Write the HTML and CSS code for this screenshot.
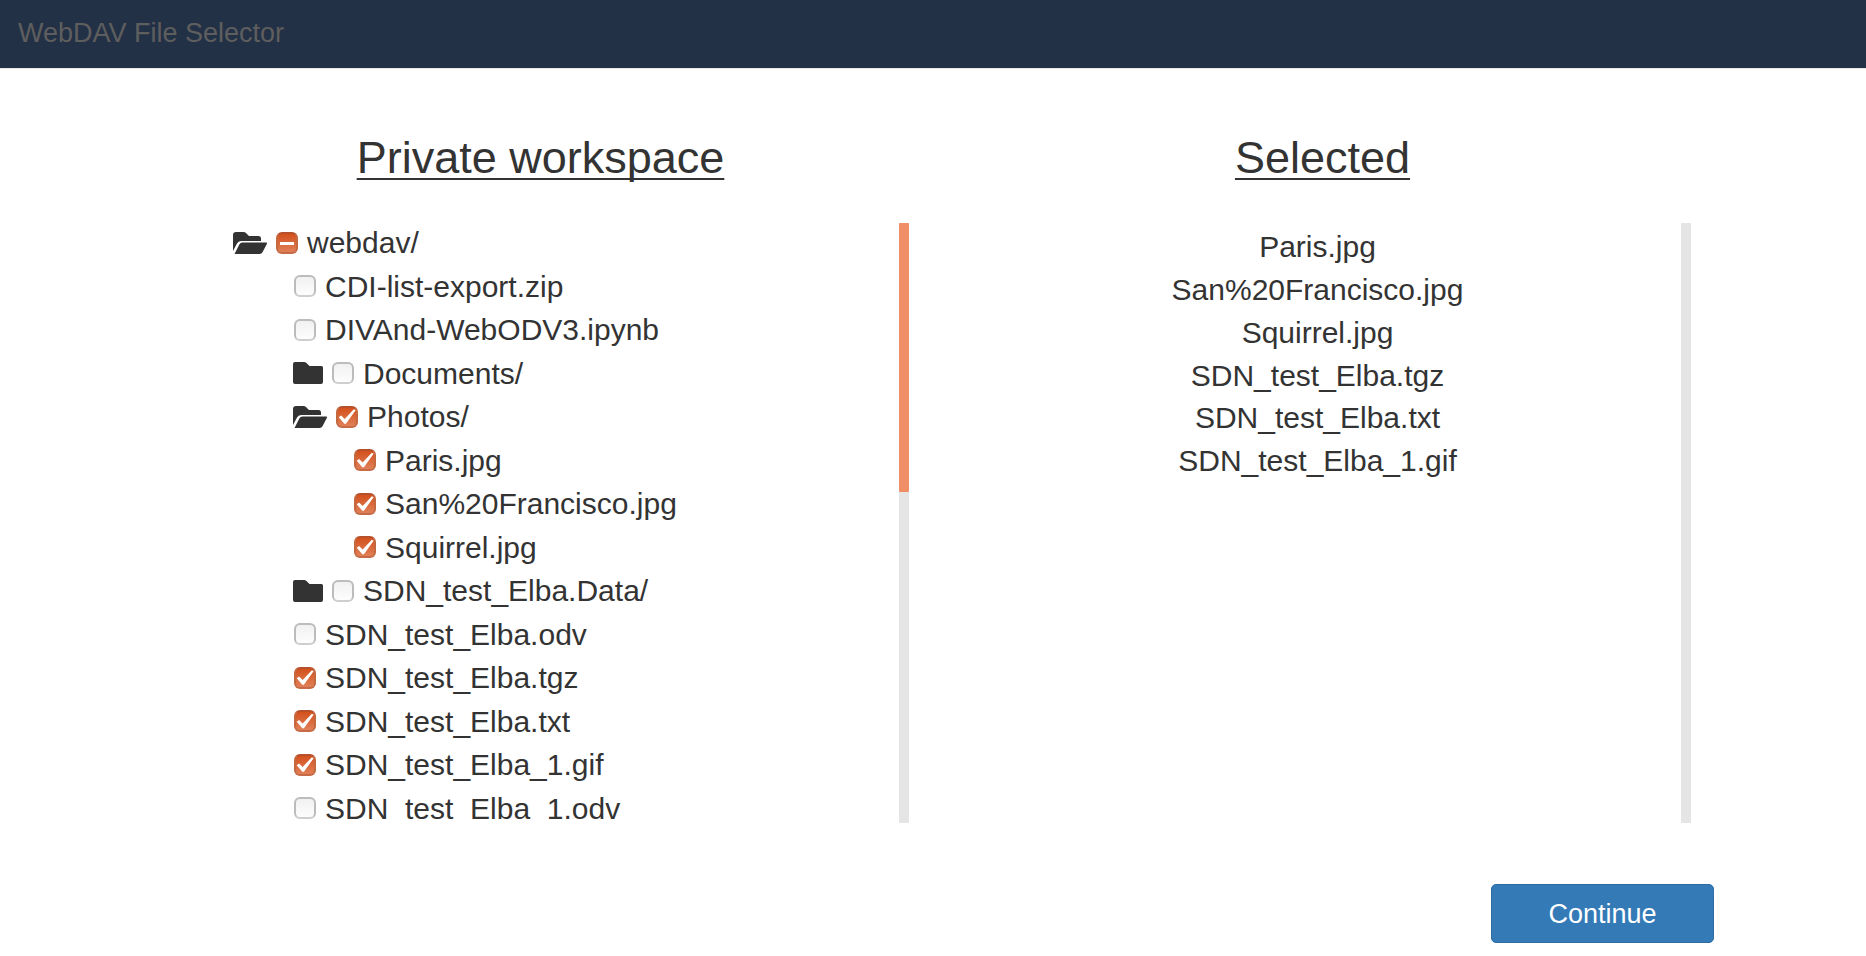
FILE: index.html
```html
<!DOCTYPE html>
<html lang="en">
<head>
<meta charset="utf-8">
<title>WebDAV File Selector</title>
<link rel="stylesheet" href="styles.css">
</head>
<body>
<svg class="sprite" aria-hidden="true">
  <symbol id="folder-open" viewBox="0 0 34 22">
    <path d="M0 19V3Q0 0 3 0H10.500Q12 0 13 1L16 4H25.500Q28 4 28 6.500V9H8Q5.300 9 4 11.500Z"/>
    <path d="M1.500 22L6.300 12.500Q7.300 10.500 9.500 10.500H33.500Q34.300 10.800 33.800 11.900L29.500 20.300Q28.600 22 26.600 22Z"/>
  </symbol>
  <symbol id="folder" viewBox="0 0 30 22">
    <path d="M0 2Q0 0 2 0H11Q12.500 0 13.500 1L16.500 4H28.500Q30 4 30 5.500V20Q30 22 28 22H2Q0 22 0 20Z"/>
  </symbol>
</svg>
<header class="navbar"><span class="brand">WebDAV File Selector</span></header>
<main class="content">
  <div class="panes">
    <section>
      <h1 class="title">Private workspace</h1>
      <div class="pane">
        <ul class="tree">
          <li>
            <div class="row"><svg class="icon icon-open"><use href="#folder-open"/></svg><input class="check partial" type="checkbox" id="f0"><label for="f0">webdav/</label></div>
            <ul class="branch">
              <li class="row"><input class="check" type="checkbox" id="f1"><label for="f1">CDI-list-export.zip</label></li>
              <li class="row"><input class="check" type="checkbox" id="f2"><label for="f2">DIVAnd-WebODV3.ipynb</label></li>
              <li class="row"><svg class="icon"><use href="#folder"/></svg><input class="check" type="checkbox" id="f3"><label for="f3">Documents/</label></li>
              <li>
                <div class="row"><svg class="icon icon-open"><use href="#folder-open"/></svg><input class="check" type="checkbox" id="f4" checked><label for="f4">Photos/</label></div>
                <ul class="branch">
                  <li class="row"><input class="check" type="checkbox" id="f5" checked><label for="f5">Paris.jpg</label></li>
                  <li class="row"><input class="check" type="checkbox" id="f6" checked><label for="f6">San%20Francisco.jpg</label></li>
                  <li class="row"><input class="check" type="checkbox" id="f7" checked><label for="f7">Squirrel.jpg</label></li>
                </ul>
              </li>
              <li class="row"><svg class="icon"><use href="#folder"/></svg><input class="check" type="checkbox" id="f8"><label for="f8">SDN_test_Elba.Data/</label></li>
              <li class="row"><input class="check" type="checkbox" id="f9"><label for="f9">SDN_test_Elba.odv</label></li>
              <li class="row"><input class="check" type="checkbox" id="f10" checked><label for="f10">SDN_test_Elba.tgz</label></li>
              <li class="row"><input class="check" type="checkbox" id="f11" checked><label for="f11">SDN_test_Elba.txt</label></li>
              <li class="row"><input class="check" type="checkbox" id="f12" checked><label for="f12">SDN_test_Elba_1.gif</label></li>
              <li class="row"><input class="check" type="checkbox" id="f13"><label for="f13">SDN_test_Elba_1.odv</label></li>
            </ul>
          </li>
        </ul>
        <div class="track"><div class="thumb"></div></div>
      </div>
    </section>
    <section>
      <h1 class="title">Selected</h1>
      <div class="pane">
        <ul class="selected">
          <li>Paris.jpg</li>
          <li>San%20Francisco.jpg</li>
          <li>Squirrel.jpg</li>
          <li>SDN_test_Elba.tgz</li>
          <li>SDN_test_Elba.txt</li>
          <li>SDN_test_Elba_1.gif</li>
        </ul>
        <div class="track"></div>
      </div>
    </section>
  </div>
  <div class="actions"><button class="continue" type="button">Continue</button></div>
</main>
</body>
</html>
```
FILE: styles.css
```css
* { box-sizing: border-box; }
body {
  margin: 0;
  background: #fff;
  color: #333;
  font-family: "Liberation Sans", Arial, sans-serif;
  font-size: 30px;
}
ul { list-style: none; margin: 0; padding: 0; }
.sprite { display: none; }
.navbar {
  padding: 13px 18px 15px;
  background: #233147;
  border-bottom: 1px solid #e7e7e7;
  color: #5e5e5e;
  font-size: 27px;
  line-height: 40px;
}
.panes {
  display: grid;
  grid-template-columns: 1fr 1fr;
  gap: 45px;
  padding: 64px 175px 0 172px;
}
.title {
  margin: 0 0 40px;
  font-size: 45px;
  font-weight: 400;
  line-height: 50px;
  text-align: center;
  text-decoration: underline;
  text-decoration-thickness: 2px;
  text-decoration-skip-ink: none;
  text-underline-offset: 5px;
}
.pane { display: flex; height: 600px; overflow: hidden; }
.tree {
  flex: 1;
  margin-top: -2px;
  padding-left: 61px;
  line-height: 1.45;
}
.branch { padding-left: 60px; }
.row { display: flex; align-items: center; gap: 8px; }
.icon { width: 30px; height: 22px; fill: #333; }
.icon-open { width: 34px; }
.check {
  appearance: none;
  position: relative;
  width: 22px;
  height: 22px;
  margin: 0 1px;
  border: 2px solid #bcbcbc;
  border-bottom-color: #cfcfcf;
  border-radius: 6px;
  background: linear-gradient(#f1f1f1, #fdfdfd);
}
.check:checked, .check.partial {
  border-color: #b5502a #c4683f #c76a47;
  background: linear-gradient(#d3511d, #e08058);
}
.check::before { position: absolute; background: #fff; }
.check:checked::before {
  content: "";
  inset: 0;
  clip-path: polygon(4% 53%, 17% 43%, 37% 62%, 88% 8%, 98% 14%, 44% 89%, 35% 89%);
}
.check.partial::before { content: ""; left: 2px; right: 2px; top: 8px; height: 3px; }
.track { flex: none; width: 10px; background: #e5e5e5; }
.thumb { height: 269px; border-radius: 1px; background: #f08f67; }
.selected { flex: 1; padding-top: 3px; line-height: 1.428571; text-align: center; }
.actions { display: flex; justify-content: flex-end; padding: 61px 152px 12px; }
.continue {
  width: 223px;
  padding: 10px 18px 8px;
  border: 1px solid #2e6da4;
  border-radius: 5px;
  background: #337ab7;
  color: #fff;
  font-family: inherit;
  font-size: 27px;
  line-height: 39px;
}
```
